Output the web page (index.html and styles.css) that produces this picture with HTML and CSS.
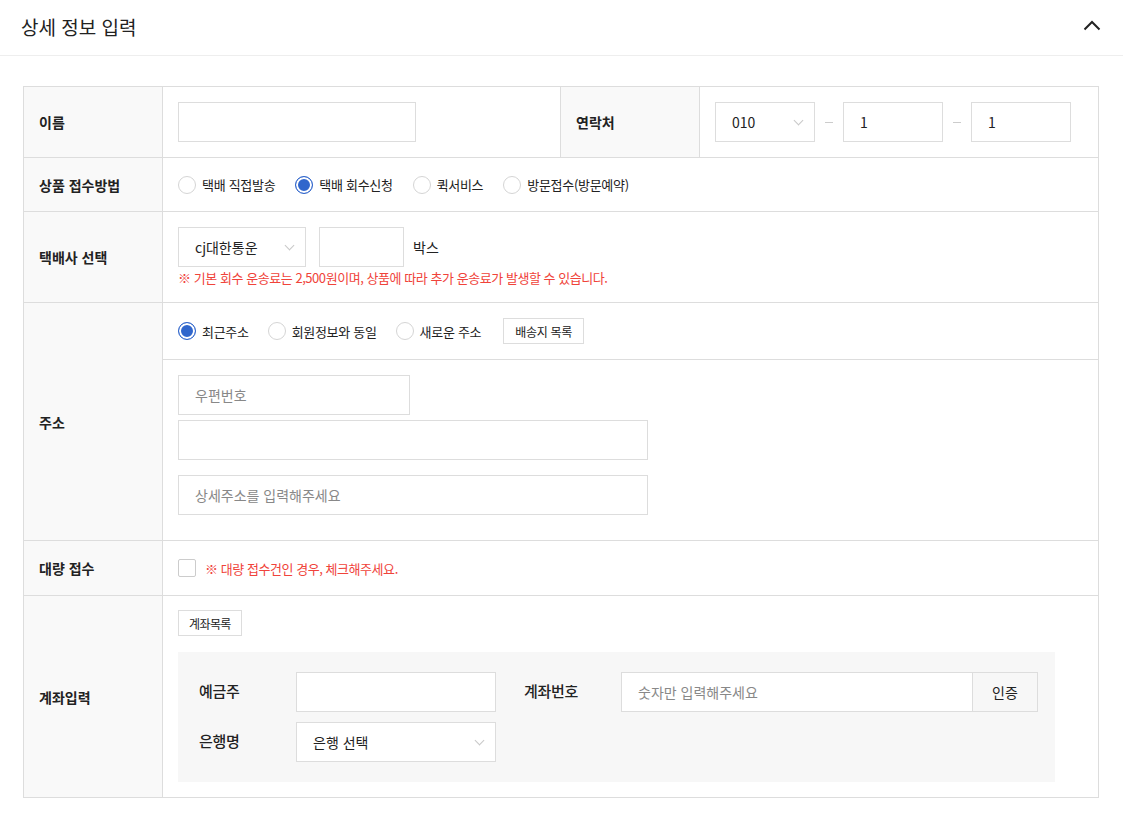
FILE: index.html
```html
<!DOCTYPE html>
<html lang="ko">
<head>
<meta charset="utf-8">
<title>상세 정보 입력</title>
<link rel="stylesheet" href="styles.css">
</head>
<body>
<div class="page">
  <div class="head">
    <h2 class="head-title">상세 정보 입력</h2>
    <svg class="head-chevron" width="18" height="11" viewBox="0 0 18 11"><path d="M1.5 9.5 L9 2 L16.5 9.5" fill="none" stroke="#222" stroke-width="2"/></svg>
  </div>

  <table class="form">
    <colgroup>
      <col class="c-th"><col class="c-td"><col class="c-th"><col class="c-td2">
    </colgroup>
    <tr class="r1">
      <th>이름</th>
      <td><div class="inp w237"></div></td>
      <th>연락처</th>
      <td>
        <div class="phone">
          <div class="sel w100"><span>010</span><i class="arr"></i></div>
          <span class="dash"></span>
          <div class="inp w100"><span>1</span></div>
          <span class="dash"></span>
          <div class="inp w100"><span>1</span></div>
        </div>
      </td>
    </tr>
    <tr class="r2">
      <th>상품 접수방법</th>
      <td colspan="3">
        <div class="radios">
          <label class="rd"><i class="dot"></i>택배 직접발송</label>
          <label class="rd on"><i class="dot"></i>택배 회수신청</label>
          <label class="rd"><i class="dot"></i>퀵서비스</label>
          <label class="rd"><i class="dot"></i>방문접수(방문예약)</label>
        </div>
      </td>
    </tr>
    <tr class="r3">
      <th>택배사 선택</th>
      <td colspan="3">
        <div class="courier">
          <div class="sel w128"><span>cj대한통운</span><i class="arr"></i></div>
          <div class="inp w85"></div>
          <span class="unit">박스</span>
        </div>
        <p class="note">※ 기본 회수 운송료는 2,500원이며, 상품에 따라 추가 운송료가 발생할 수 있습니다.</p>
      </td>
    </tr>
    <tr class="r4">
      <th>주소</th>
      <td colspan="3" class="addr-cell">
        <div class="addr-top">
          <label class="rd on"><i class="dot"></i>최근주소</label>
          <label class="rd"><i class="dot"></i>회원정보와 동일</label>
          <label class="rd"><i class="dot"></i>새로운 주소</label>
          <button class="sbtn">배송지 목록</button>
        </div>
        <div class="addr-bot">
          <div class="inp w232 ph"><span>우편번호</span></div>
          <div class="inp w470 mt5"></div>
          <div class="inp w470 mt15 ph"><span>상세주소를 입력해주세요</span></div>
        </div>
      </td>
    </tr>
    <tr class="r5">
      <th>대량 접수</th>
      <td colspan="3">
        <div class="bulk"><i class="chk"></i><span class="note-inline">※ 대량 접수건인 경우, 체크해주세요.</span></div>
      </td>
    </tr>
    <tr class="r6">
      <th>계좌입력</th>
      <td colspan="3">
        <button class="sbtn sbtn-sm">계좌목록</button>
        <div class="acct">
          <div class="acct-row">
            <span class="acct-label">예금주</span>
            <div class="inp w200"></div>
            <span class="acct-label ml">계좌번호</span>
            <div class="inp w352 ph"><span>숫자만 입력해주세요</span></div>
            <button class="auth">인증</button>
          </div>
          <div class="acct-row mt10">
            <span class="acct-label">은행명</span>
            <div class="sel w200"><span>은행 선택</span><i class="arr"></i></div>
          </div>
        </div>
      </td>
    </tr>
  </table>
</div>
</body>
</html>
```

FILE: styles.css
```css
* { box-sizing: border-box; }
html, body { margin: 0; padding: 0; background: #fff; }
body {
  font-family: "Noto Sans CJK KR", "Noto Sans", sans-serif;
  color: #222;
  font-size: 14px;
}
.page { width: 1123px; }
.head {
  height: 56px;
  border-bottom: 1px solid #eeeeee;
  display: flex;
  align-items: center;
  justify-content: space-between;
  padding: 0 22px 2px 21px;
}
.head-title {
  margin: 0;
  font-size: 19px;
  font-weight: 400;
  letter-spacing: 0;
  color: #222;
}
.head-chevron { display: block; margin-top: -2px; }

.form {
  margin: 30px 0 0 23px;
  border-collapse: collapse;
  width: 1076px;
  table-layout: fixed;
}
.c-th { width: 139px; }
.c-td { width: 398px; }
.c-td2 { width: 399px; }
.form th, .form td {
  border: 1px solid #dddddd;
  vertical-align: middle;
  padding: 0;
}
.form th {
  background: #f9f9f9;
  text-align: left;
  padding-left: 15px;
  font-size: 14px;
  font-weight: 700;
  letter-spacing: 0;
}
.form td { padding: 0 15px; }

.r1 td { height: 71px; }
.r2 td { height: 54px; }
.r3 td { height: 91px; padding-top: 15px; padding-bottom: 14px; vertical-align: top; }
.r5 td { height: 55px; }
.r6 td { height: 201px; padding-top: 14px; padding-bottom: 15px; vertical-align: top; }

.inp, .sel {
  height: 40px;
  border: 1px solid #dddddd;
  background: #fff;
  display: flex;
  align-items: center;
  padding: 0 16px;
  font-size: 14px;
  color: #222;
  flex: none;
}
.sel { position: relative; }
.sel .arr {
  position: absolute;
  right: 12px;
  top: 14px;
  width: 7px;
  height: 7px;
  border-right: 1px solid #c8c8c8;
  border-bottom: 1px solid #c8c8c8;
  transform: rotate(45deg);
}
.ph span { color: #888; }
.w237 { width: 238px; }
.w100 { width: 100px; }
.w128 { width: 128px; }
.w85 { width: 85px; }
.w232 { width: 232px; }
.w470 { width: 470px; }
.w200 { width: 200px; }
.w352 { width: 352px; }
.mt5 { margin-top: 5px; }
.mt15 { margin-top: 15px; }
.mt10 { margin-top: 10px; }

.phone { display: flex; align-items: center; }
.dash {
  width: 8px;
  height: 1px;
  background: #cccccc;
  margin: 0 10px;
}

.radios { display: flex; align-items: center; }
.radios .rd { margin-right: 20px; letter-spacing: -0.3px; }
.rd {
  display: inline-flex;
  align-items: center;
  font-size: 13px;
  letter-spacing: -0.3px;
  margin-right: 21px;
  color: #222;
}
.dot {
  width: 18px;
  height: 18px;
  border-radius: 50%;
  border: 1px solid #d5d5d5;
  background: #fff;
  margin-right: 6px;
  flex: none;
}
.rd.on .dot {
  border: 1px solid #3066cc;
  background: #3066cc;
  box-shadow: inset 0 0 0 2px #fff;
}

.courier { display: flex; align-items: center; }
.courier .sel { padding-left: 16px; }
.courier .inp { margin-left: 13px; }
.unit { margin-left: 9px; font-size: 14px; }
.note {
  margin: 2px 0 0;
  font-size: 13px;
  letter-spacing: -0.45px;
  color: #f0433a;
  line-height: 18px;
}

.addr-cell.addr-cell { padding: 0; vertical-align: top; }
.addr-top {
  height: 57px;
  border-bottom: 1px solid #dddddd;
  display: flex;
  align-items: center;
  padding: 0 15px;
}
.addr-top .rd { margin-right: 19px; }
.addr-bot { padding: 15px 15px 25px; height: 180px; }

.sbtn {
  font-family: inherit;
  height: 26px;
  border: 1px solid #dddddd;
  background: #fff;
  font-size: 12px;
  color: #222;
  padding: 0 11px;
  letter-spacing: -0.3px;
  cursor: pointer;
  display: block;
}
.sbtn-sm { padding: 0 10px; letter-spacing: -0.6px; }
.addr-top .sbtn { margin-left: 3px; }

.bulk { display: flex; align-items: center; }
.chk {
  width: 18px;
  height: 18px;
  border: 1px solid #cccccc;
  border-radius: 2px;
  background: #fff;
  margin-right: 9px;
}
.note-inline {
  font-size: 13px;
  letter-spacing: -0.45px;
  color: #f0433a;
}

.acct {
  margin-top: 16px;
  background: #f7f7f7;
  width: 877px;
  height: 130px;
  padding: 20px 0 20px 21px;
}
.acct-row { display: flex; align-items: center; }
.acct-label {
  width: 97px;
  flex: none;
  font-size: 15px;
  font-weight: 500;
  letter-spacing: -0.3px;
  margin-top: -4px;
}
.acct-label.ml { margin-left: 28px; }
.auth {
  font-family: inherit;
  width: 65px;
  height: 40px;
  flex: none;
  border: 1px solid #dddddd;
  border-left: none;
  background: #f7f7f7;
  font-size: 14px;
  color: #222;
}
```
